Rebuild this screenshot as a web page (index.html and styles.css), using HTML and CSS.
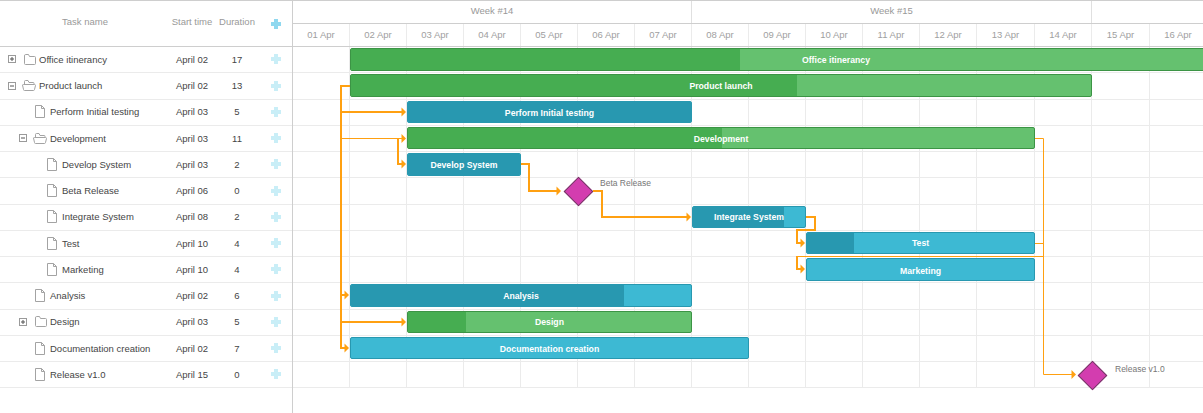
FILE: index.html
```html
<!DOCTYPE html>
<html lang="en">
<head>
<meta charset="utf-8">
<title>Gantt chart</title>
<link rel="stylesheet" href="styles.css">
</head>
<body>
<svg width="0" height="0" class="defs">
  <symbol id="i-file" viewBox="0 0 10 13"><path d="M.5 .5H6.500L9.500 3.500V12.500H.5Z M6.500 .5V3.500H9.500" fill="#fff" stroke="#a3a3a3"/></symbol>
  <symbol id="i-closed" viewBox="0 0 12 11"><path d="M.5 2V9.500Q.5 10.500 1.500 10.500H10.500Q11.500 10.500 11.500 9.500V3.500Q11.500 2.500 10.500 2.500H5.500L4.500 .5H1.500Q.5 .5 .5 2Z" fill="#fff" stroke="#a3a3a3"/></symbol>
  <symbol id="i-open" viewBox="0 0 14 11"><path d="M2.500 4V1.500Q2.500 .5 3.500 .5H6L7 2.500H11.500Q12 2.500 12 3.500V4.500M.5 5Q.5 4.500 1.500 4.500H12.500Q13.500 4.500 13.500 5.500L12.500 9.500Q12.300 10.500 11.500 10.500H2.500Q1.500 10.500 1.500 9.500Z" fill="#fff" stroke="#a3a3a3"/></symbol>
  <symbol id="i-plus" viewBox="0 0 8 8"><rect x=".5" y=".5" width="7" height="7" fill="#fff" stroke="#9a9a9a"/><path d="M2 4H6M4 2V6" stroke="#555"/></symbol>
  <symbol id="i-minus" viewBox="0 0 8 8"><rect x=".5" y=".5" width="7" height="7" fill="#fff" stroke="#9a9a9a"/><path d="M2 4H6" stroke="#555"/></symbol>
</svg>
<main class="gantt">
  <section class="grid">
    <header class="grid-head">
      <div class="c-name">Task name</div>
      <div class="c-start">Start time</div>
      <div class="c-dur">Duration</div>
      <div class="c-add add-head"></div>
    </header>
    <div class="row"><div class="c-name l0"><svg class="tog"><use href="#i-plus"/></svg><svg class="ic-closed"><use href="#i-closed"/></svg><span>Office itinerancy</span></div><div class="c-start">April 02</div><div class="c-dur">17</div><div class="c-add"></div></div>
    <div class="row"><div class="c-name l0"><svg class="tog tog-open"><use href="#i-minus"/></svg><svg class="ic-open"><use href="#i-open"/></svg><span>Product launch</span></div><div class="c-start">April 02</div><div class="c-dur">13</div><div class="c-add"></div></div>
    <div class="row"><div class="c-name l1"><svg class="ic-file"><use href="#i-file"/></svg><span>Perform Initial testing</span></div><div class="c-start">April 03</div><div class="c-dur">5</div><div class="c-add"></div></div>
    <div class="row"><div class="c-name l1t"><svg class="tog tog-open"><use href="#i-minus"/></svg><svg class="ic-open"><use href="#i-open"/></svg><span>Development</span></div><div class="c-start">April 03</div><div class="c-dur">11</div><div class="c-add"></div></div>
    <div class="row"><div class="c-name l2"><svg class="ic-file"><use href="#i-file"/></svg><span>Develop System</span></div><div class="c-start">April 03</div><div class="c-dur">2</div><div class="c-add"></div></div>
    <div class="row"><div class="c-name l2"><svg class="ic-file"><use href="#i-file"/></svg><span>Beta Release</span></div><div class="c-start">April 06</div><div class="c-dur">0</div><div class="c-add"></div></div>
    <div class="row"><div class="c-name l2"><svg class="ic-file"><use href="#i-file"/></svg><span>Integrate System</span></div><div class="c-start">April 08</div><div class="c-dur">2</div><div class="c-add"></div></div>
    <div class="row"><div class="c-name l2"><svg class="ic-file"><use href="#i-file"/></svg><span>Test</span></div><div class="c-start">April 10</div><div class="c-dur">4</div><div class="c-add"></div></div>
    <div class="row"><div class="c-name l2"><svg class="ic-file"><use href="#i-file"/></svg><span>Marketing</span></div><div class="c-start">April 10</div><div class="c-dur">4</div><div class="c-add"></div></div>
    <div class="row"><div class="c-name l1"><svg class="ic-file"><use href="#i-file"/></svg><span>Analysis</span></div><div class="c-start">April 02</div><div class="c-dur">6</div><div class="c-add"></div></div>
    <div class="row"><div class="c-name l1t"><svg class="tog"><use href="#i-plus"/></svg><svg class="ic-closed"><use href="#i-closed"/></svg><span>Design</span></div><div class="c-start">April 03</div><div class="c-dur">5</div><div class="c-add"></div></div>
    <div class="row"><div class="c-name l1"><svg class="ic-file"><use href="#i-file"/></svg><span>Documentation creation</span></div><div class="c-start">April 02</div><div class="c-dur">7</div><div class="c-add"></div></div>
    <div class="row"><div class="c-name l1"><svg class="ic-file"><use href="#i-file"/></svg><span>Release v1.0</span></div><div class="c-start">April 15</div><div class="c-dur">0</div><div class="c-add"></div></div>
  </section>
  <section class="chart">
    <div class="scale">
      <div class="weeks"><div class="week w14">Week #14</div><div class="week w15">Week #15</div><div class="week week-rest"></div></div>
      <div class="days">
        <div class="day">01 Apr</div><div class="day">02 Apr</div><div class="day">03 Apr</div><div class="day">04 Apr</div><div class="day">05 Apr</div><div class="day">06 Apr</div><div class="day">07 Apr</div><div class="day">08 Apr</div><div class="day">09 Apr</div><div class="day">10 Apr</div><div class="day">11 Apr</div><div class="day">12 Apr</div><div class="day wide">13 Apr</div><div class="day">14 Apr</div><div class="day wide">15 Apr</div><div class="day">16 Apr</div>
      </div>
    </div>
    <div class="canvas">
      <div class="cols">
        <div class="day"></div><div class="day"></div><div class="day"></div><div class="day"></div><div class="day"></div><div class="day"></div><div class="day"></div><div class="day"></div><div class="day"></div><div class="day"></div><div class="day"></div><div class="day"></div><div class="day wide"></div><div class="day"></div><div class="day wide"></div><div class="day"></div>
      </div>
      <div class="lines">
        <div class="tr"></div><div class="tr"></div><div class="tr"></div><div class="tr"></div><div class="tr"></div><div class="tr"></div><div class="tr"></div><div class="tr"></div><div class="tr"></div><div class="tr"></div><div class="tr"></div><div class="tr"></div><div class="tr"></div>
      </div>

      <div class="bar green" style="left:57px;top:1px;width:972px;height:23px"><i class="prog" style="width:389px"></i><span>Office itinerancy</span></div>
      <div class="bar green" style="left:57px;top:27px;width:742px;height:23px"><i class="prog" style="width:446px"></i><span>Product launch</span></div>
      <div class="bar blue low" style="left:114px;top:54px;width:285px;height:22px"><i class="prog" style="width:100%"></i><span>Perform Initial testing</span></div>
      <div class="bar green low" style="left:114px;top:80px;width:628px;height:22px"><i class="prog" style="width:314px"></i><span>Development</span></div>
      <div class="bar blue" style="left:114px;top:106px;width:114px;height:23px"><i class="prog" style="width:100%"></i><span>Develop System</span></div>
      <div class="bar blue" style="left:399px;top:159px;width:114px;height:22px"><i class="prog" style="width:91px"></i><span>Integrate System</span></div>
      <div class="bar blue" style="left:513px;top:185px;width:229px;height:22px"><i class="prog" style="width:47px"></i><span>Test</span></div>
      <div class="bar blue low" style="left:513px;top:211px;width:229px;height:23px"><span>Marketing</span></div>
      <div class="bar blue" style="left:57px;top:237px;width:342px;height:23px"><i class="prog" style="width:273px"></i><span>Analysis</span></div>
      <div class="bar green" style="left:114px;top:264px;width:285px;height:22px"><i class="prog" style="width:58px"></i><span>Design</span></div>
      <div class="bar blue low" style="left:57px;top:290px;width:399px;height:22px"><span>Documentation creation</span></div>

      <div class="mile" style="left:274.500px;top:133.500px"></div>
      <div class="mile-label" style="left:307px;top:131px">Beta Release</div>
      <div class="mile" style="left:789px;top:317.500px"></div>
      <div class="mile-label" style="left:822px;top:317px">Release v1.0</div>

      <svg class="links" width="910" height="366" viewBox="0 0 910 366">
        <g class="link thick">
          <path d="M57 39H48V301H52"/>
          <path d="M48 65H109"/>
          <path d="M48 248H52"/>
          <path d="M48 275H109"/>
          <path d="M105 91V117H109"/>
          <path d="M228 117H236V144H264"/>
          <path d="M300 144H309V170H394"/>
          <path d="M513 170H522V183H504V196H508"/>
          <path d="M504 209V222H508"/>
        </g>
        <g class="link thin">
          <path d="M48 91.500H109"/>
          <path d="M503 209.500H750.500"/>
          <path d="M742 91.500H750.500V327.500H779"/>
          <path d="M742 196.500H750.500"/>
        </g>
        <g class="heads">
          <path d="M113 65L108.500 60.500V69.500Z"/>
          <path d="M113 91.500L108.500 87V96Z"/>
          <path d="M113 117L108.500 112.500V121.500Z"/>
          <path d="M268 144L263.500 139.500V148.500Z"/>
          <path d="M398 170L393.500 165.500V174.500Z"/>
          <path d="M512 196L507.500 191.500V200.500Z"/>
          <path d="M512 222L507.500 217.500V226.500Z"/>
          <path d="M56 248L51.500 243.500V252.500Z"/>
          <path d="M113 275L108.500 270.500V279.500Z"/>
          <path d="M56 301L51.500 296.500V305.500Z"/>
          <path d="M783 327.500L778.500 323V332Z"/>
        </g>
      </svg>
    </div>
  </section>
</main>
</body>
</html>
```
FILE: styles.css
```css
* { box-sizing: border-box; }
html, body { margin: 0; height: 100%; overflow: hidden; background: #fff; }
body { font-family: "Liberation Sans", Arial, sans-serif; font-size: 9.5px; color: #454545; }
.defs { position: absolute; }
.gantt { display: flex; height: 413px; border-top: 1px solid #cecece; }
.grid { flex: 0 0 293px; width: 293px; border-right: 1px solid #cecece; }
.grid-head { display: flex; height: 46px; align-items: center; border-bottom: 1px solid #cecece; color: #999; padding-bottom: 4px; }
.grid-head .c-name { justify-content: center; }
.row { display: flex; align-items: center; height: 26.25px; padding-bottom: .5px; border-bottom: 1px solid #ebebeb; }
.c-name { flex: 0 0 170px; display: flex; align-items: center; white-space: nowrap; }
.c-start { flex: 0 0 46px; margin-left: -1px; text-align: center; white-space: nowrap; }
.c-dur { flex: 0 0 46px; margin-left: -1px; text-align: center; white-space: nowrap; }
.c-add { flex: 0 0 10px; margin-left: 11px; height: 10px; position: relative; }
.c-add::before, .c-add::after { content: ""; position: absolute; background: #c9eef7; }
.c-add::before { left: 0; top: 3px; width: 10px; height: 4px; }
.c-add::after { left: 3px; top: 0; width: 4px; height: 10px; }
.add-head { margin-top: 4px; }
.add-head::before, .add-head::after { background: #8fd8ef; }
.tog { width: 8px; height: 8px; margin-right: 8px; flex: none; }
.tog-open { margin-right: 6px; }
.ic-closed { width: 12px; height: 11px; margin-right: 3px; flex: none; }
.ic-open { width: 14px; height: 11px; margin-right: 3px; flex: none; }
.ic-file { width: 10px; height: 13px; margin-right: 5px; flex: none; }
.l0 { padding-left: 8px; }
.l1 { padding-left: 35px; }
.l1t { padding-left: 19px; }
.l2 { padding-left: 47px; }
.chart { flex: 1; min-width: 0; overflow: hidden; }
.scale { height: 46px; border-bottom: 1px solid #cecece; }
.weeks { display: flex; height: 23px; border-bottom: 1px solid #cecece; }
.week { display: flex; align-items: center; justify-content: center; padding-bottom: 3px; color: #999; border-right: 1px solid #e0e0e0; }
.w14 { flex: 0 0 399px; }
.w15 { flex: 0 0 400px; }
.week-rest { flex: 1; border-right: 0; }
.days, .cols { display: flex; width: 916px; }
.days { height: 22px; }
.day { flex: 0 0 57px; display: flex; align-items: center; justify-content: center; padding-bottom: 2px; color: #a0a0a0; border-right: 1px solid #ebebeb; }
.wide { flex-basis: 58px; }
.canvas { position: relative; height: 366px; overflow: hidden; }
.cols { position: absolute; left: 0; top: 0; height: 341px; }
.lines { position: relative; }
.tr { height: 26.25px; border-bottom: 1px solid #ebebeb; }
.bar { position: absolute; border: 1px solid; border-radius: 2px; display: flex; align-items: center; justify-content: center; color: #fff; font-weight: bold; font-size: 8.7px; overflow: hidden; }
.low { padding-top: 2px; }
.bar span { position: relative; white-space: nowrap; }
.prog { position: absolute; left: 0; top: 0; bottom: 0; }
.green { background: #65c16f; border-color: #3c9445; }
.green .prog { background: #46ad51; }
.blue { background: #3db9d3; border-color: #2898b0; }
.blue .prog { background: #2898b0; }
.mile { position: absolute; width: 21px; height: 21px; transform: rotate(45deg); background: #d33daf; border: 1px solid #6f3a62; }
.mile-label { position: absolute; font-size: 8.5px; color: #777; white-space: nowrap; }
.links { position: absolute; left: 0; top: 0; pointer-events: none; }
.link path { fill: none; stroke: #ffa011; }
.thick path { stroke-width: 2; }
.thin path { stroke-width: 1; }
.heads path { fill: #ffa011; }
```
